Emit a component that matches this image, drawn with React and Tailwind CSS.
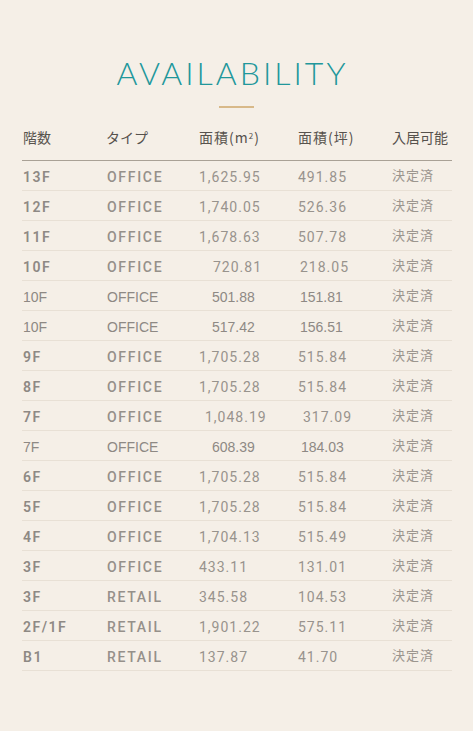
import React from "react";

// plain: the rows set without letter spacing; off: left nudges for type / m2 / tsubo cells
const rows = [
  { floor: "13F", type: "OFFICE", m2: "1,625.95", tsubo: "491.85" },
  { floor: "12F", type: "OFFICE", m2: "1,740.05", tsubo: "526.36" },
  { floor: "11F", type: "OFFICE", m2: "1,678.63", tsubo: "507.78" },
  { floor: "10F", type: "OFFICE", m2: "720.81", tsubo: "218.05", off: ["", "pl-[14px]", "pl-[2px]"] },
  { floor: "10F", type: "OFFICE", m2: "501.88", tsubo: "151.81", plain: true, off: ["pl-[2px]", "pl-[13px]", "pl-[2px]"] },
  { floor: "10F", type: "OFFICE", m2: "517.42", tsubo: "156.51", plain: true, off: ["pl-[4px]", "pl-[13px]", "pl-[2px]"] },
  { floor: "9F", type: "OFFICE", m2: "1,705.28", tsubo: "515.84" },
  { floor: "8F", type: "OFFICE", m2: "1,705.28", tsubo: "515.84" },
  { floor: "7F", type: "OFFICE", m2: "1,048.19", tsubo: "317.09", off: ["", "pl-[6px]", "pl-[5px]"] },
  { floor: "7F", type: "OFFICE", m2: "608.39", tsubo: "184.03", plain: true, off: ["pl-[2px]", "pl-[13px]", "pl-[3px]"] },
  { floor: "6F", type: "OFFICE", m2: "1,705.28", tsubo: "515.84" },
  { floor: "5F", type: "OFFICE", m2: "1,705.28", tsubo: "515.84" },
  { floor: "4F", type: "OFFICE", m2: "1,704.13", tsubo: "515.49" },
  { floor: "3F", type: "OFFICE", m2: "433.11", tsubo: "131.01" },
  { floor: "3F", type: "RETAIL", m2: "345.58", tsubo: "104.53" },
  { floor: "2F/1F", type: "RETAIL", m2: "1,901.22", tsubo: "575.11" },
  { floor: "B1", type: "RETAIL", m2: "137.87", tsubo: "41.70" },
];

const cols = "grid grid-cols-[84px_93px_99px_94px_60px]";

function Row({ r }) {
  const off = r.off || ["", "", ""];
  const font = r.plain
    ? "font-['Liberation_Sans',Arial,sans-serif]"
    : "font-['Roboto',sans-serif]";
  return (
    <div className={`${cols} h-[30px] items-center border-b border-[#e8e0d5] pt-[4px] text-[14px] text-[#8e8984]`}>
      <div className={`${font} pl-px ${r.plain ? "" : "font-semibold tracking-[1.5px]"}`}>
        {r.floor}
      </div>
      <div className={`${font} pl-px ${off[0]} ${r.plain ? "" : "font-medium tracking-[1.7px] text-[#95908a]"}`}>
        {r.type}
      </div>
      <div className={`${font} ${off[1]} ${r.plain ? "" : "tracking-[1px] text-[#98938d]"}`}>
        {r.m2}
      </div>
      <div className={`${font} ${off[2]} ${r.plain ? "" : "tracking-[1px] text-[#98938d]"}`}>
        {r.tsubo}
      </div>
      <div className="-translate-y-[3px] font-['Noto_Sans_CJK_JP',sans-serif] text-[13px] tracking-[1px] text-[#9c968f]">
        決定済
      </div>
    </div>
  );
}

export default function App() {
  return (
    <div className="min-h-[731px] w-full bg-[#f5efe7] pt-[56px]">
      <h1 className="pr-[8px] text-center font-['Lato',sans-serif] text-[32px] font-light leading-[34px] tracking-[3px] text-[#21979b]">
        AVAILABILITY
      </h1>
      <div className="mx-auto mt-[16px] h-[2px] w-[35px] bg-[#d8b989]" />
      <div className="mx-[22px] mt-[14px] w-[430px]">
        <div className={`${cols} h-[39px] items-start border-b border-[#a9a196] pt-[5px] font-['Noto_Sans_CJK_JP',sans-serif] text-[14px] text-[#57524d]`}>
          <div className="pl-px">階数</div>
          <div>タイプ</div>
          <div className="tracking-[1px]">
            面積(m<sup className="text-[8px]">2</sup>)
          </div>
          <div className="tracking-[1px]">面積(坪)</div>
          <div>入居可能</div>
        </div>
        {rows.map((r, i) => (
          <Row key={i} r={r} />
        ))}
      </div>
    </div>
  );
}
